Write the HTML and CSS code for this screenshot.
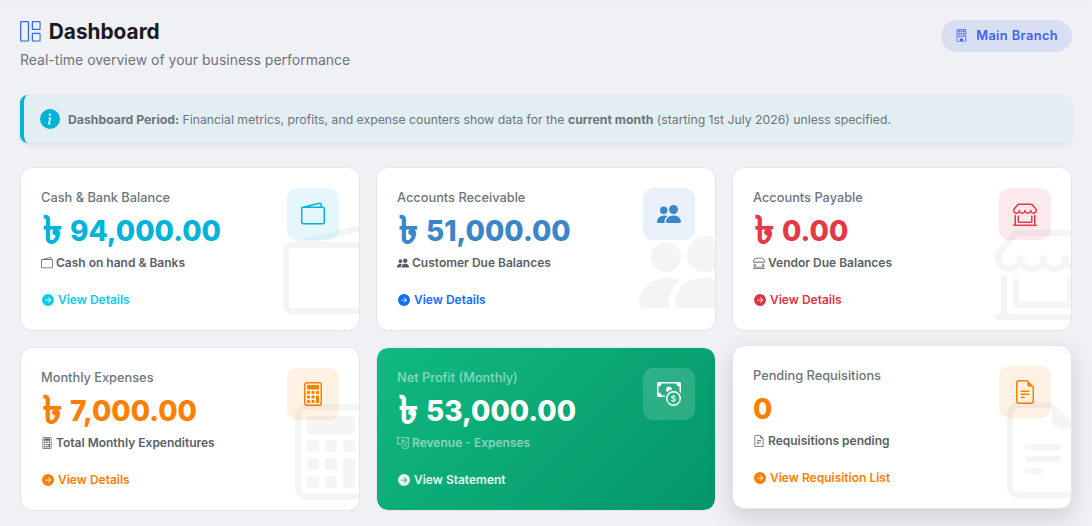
FILE: index.html
```html
<!DOCTYPE html>
<html lang="en">
<head>
  <meta charset="UTF-8">
  <meta name="viewport" content="width=device-width, initial-scale=1.0">
  <title>Dashboard</title>
  <link rel="stylesheet" href="styles.css">
</head>
<body>

  <!-- Icons -->
  <svg class="sprite" xmlns="http://www.w3.org/2000/svg">
    <symbol id="grid" viewBox="0 0 16 16"><path d="M6 1H1v14h5zm9 0h-5v5h5zm0 9v5h-5v-5zM0 1a1 1 0 0 1 1-1h5a1 1 0 0 1 1 1v14a1 1 0 0 1-1 1H1a1 1 0 0 1-1-1zm9 0a1 1 0 0 1 1-1h5a1 1 0 0 1 1 1v5a1 1 0 0 1-1 1h-5a1 1 0 0 1-1-1zm1 8a1 1 0 0 0-1 1v5a1 1 0 0 0 1 1h5a1 1 0 0 0 1-1v-5a1 1 0 0 0-1-1z"/></symbol>
    <symbol id="building" viewBox="0 0 16 16">
      <path d="M2 1a1 1 0 0 1 1-1h10a1 1 0 0 1 1 1v14a1 1 0 0 1-1 1H3a1 1 0 0 1-1-1zm11 0H3v14h3v-2.5a.5.5 0 0 1 .5-.5h3a.5.5 0 0 1 .5.5V15h3z"/>
      <path d="M4 2h2v2H4zM7 2h2v2H7zM10 2h2v2h-2zM4 5h2v2H4zM7 5h2v2H7zM10 5h2v2h-2zM4 8h2v2H4zM7 8h2v2H7zM10 8h2v2h-2z"/>
    </symbol>
    <symbol id="info" viewBox="0 0 16 16"><path d="M8 16A8 8 0 1 0 8 0a8 8 0 0 0 0 16m.93-9.412-1 4.705c-.07.34.029.533.304.533.194 0 .487-.07.686-.246l-.088.416c-.287.346-.92.598-1.465.598-.703 0-1.002-.422-.808-1.319l.738-3.468c.064-.293.006-.399-.287-.47l-.451-.081.082-.381 2.29-.287zM8 5.5a1 1 0 1 1 0-2 1 1 0 0 1 0 2"/></symbol>
    <symbol id="wallet" viewBox="0 0 16 16"><path d="M12.136.326A1.5 1.5 0 0 1 14 1.78V3h.5A1.5 1.5 0 0 1 16 4.5v9a1.5 1.5 0 0 1-1.5 1.5h-13A1.5 1.5 0 0 1 0 13.5v-9a1.5 1.5 0 0 1 1.432-1.499zM5.562 3H13V1.78a.5.5 0 0 0-.621-.484zM1.5 4a.5.5 0 0 0-.5.5v9a.5.5 0 0 0 .5.5h13a.5.5 0 0 0 .5-.5v-9a.5.5 0 0 0-.5-.5z"/></symbol>
    <symbol id="people" viewBox="0 0 16 16"><path d="M7 14s-1 0-1-1 1-4 5-4 5 3 5 4-1 1-1 1zm4-6a3 3 0 1 0 0-6 3 3 0 0 0 0 6m-5.784 6A2.24 2.24 0 0 1 5 13c0-1.355.68-2.75 1.936-3.72A6.3 6.3 0 0 0 5 9c-4 0-5 3-5 4s1 1 1 1zM4.5 8a2.5 2.5 0 1 0 0-5 2.5 2.5 0 0 0 0 5"/></symbol>
    <symbol id="shop" viewBox="0 0 16 16"><path d="M2.97 1.35A1 1 0 0 1 3.73 1h8.54a1 1 0 0 1 .76.35l2.609 3.044A1.5 1.5 0 0 1 16 5.37v.255a2.375 2.375 0 0 1-4.25 1.458A2.37 2.37 0 0 1 9.875 8 2.37 2.37 0 0 1 8 7.083 2.37 2.37 0 0 1 6.125 8a2.37 2.37 0 0 1-1.875-.917A2.375 2.375 0 0 1 0 5.625V5.37a1.5 1.5 0 0 1 .361-.976zm1.78 4.275a1.375 1.375 0 0 0 2.75 0 .5.5 0 0 1 1 0 1.375 1.375 0 0 0 2.75 0 .5.5 0 0 1 1 0 1.375 1.375 0 1 0 2.75 0V5.37a.5.5 0 0 0-.12-.325L12.27 2H3.73L1.12 5.045A.5.5 0 0 0 1 5.37v.255a1.375 1.375 0 0 0 2.75 0 .5.5 0 0 1 1 0M1.5 8.5A.5.5 0 0 1 2 9v6h12.5a.5.5 0 0 1-.5-.5V9a.5.5 0 0 1 1 0v6h.5a.5.5 0 0 1 0 1H.5a.5.5 0 0 1 0-1H1V9a.5.5 0 0 1 .5-.5m2 .5a.5.5 0 0 1 .5.5V13h8V9.5a.5.5 0 0 1 1 0V13a1 1 0 0 1-1 1H4a1 1 0 0 1-1-1V9.5a.5.5 0 0 1 .5-.5"/></symbol>
    <symbol id="calculator" viewBox="0 0 16 16">
      <path d="M12 1a1 1 0 0 1 1 1v12a1 1 0 0 1-1 1H4a1 1 0 0 1-1-1V2a1 1 0 0 1 1-1zM4 0a2 2 0 0 0-2 2v12a2 2 0 0 0 2 2h8a2 2 0 0 0 2-2V2a2 2 0 0 0-2-2z"/>
      <rect x="4" y="2" width="8" height="3" rx=".5"/>
      <rect x="4" y="6" width="2" height="2" rx=".5"/>
      <rect x="7" y="6" width="2" height="2" rx=".5"/>
      <rect x="10" y="6" width="2" height="2" rx=".5"/>
      <rect x="4" y="9" width="2" height="2" rx=".5"/>
      <rect x="7" y="9" width="2" height="2" rx=".5"/>
      <rect x="10" y="9" width="2" height="5" rx=".5"/>
      <rect x="4" y="12" width="2" height="2" rx=".5"/>
      <rect x="7" y="12" width="2" height="2" rx=".5"/>
    </symbol>
    <symbol id="cash" viewBox="0 0 16 16">
      <path fill-rule="evenodd" d="M11 15a4 4 0 1 0 0-8 4 4 0 0 0 0 8m5-4a5 5 0 1 1-10 0 5 5 0 0 1 10 0"/>
      <path d="M9.438 11.944c.047.596.518 1.06 1.363 1.116v.44h.375v-.443c.875-.061 1.386-.529 1.386-1.207 0-.618-.39-.936-1.09-1.1l-.296-.07v-1.2c.376.043.614.248.671.532h.658c-.047-.575-.54-1.024-1.329-1.073V8.5h-.375v.45c-.747.073-1.255.522-1.255 1.158 0 .562.378.92 1.007 1.066l.248.061v1.272c-.384-.058-.639-.27-.696-.563h-.668zm1.36-1.354c-.369-.085-.569-.26-.569-.522 0-.294.216-.514.572-.578v1.1zm.432.746c.449.104.655.272.655.569 0 .339-.257.571-.709.614v-1.195z"/>
      <path d="M1 0a1 1 0 0 0-1 1v8a1 1 0 0 0 1 1h4.083q.088-.517.258-1H3a2 2 0 0 0-2-2V3a2 2 0 0 0 2-2h10a2 2 0 0 0 2 2v3.528c.38.34.717.728 1 1.154V1a1 1 0 0 0-1-1z"/>
      <path d="M9.998 5.083 10 5a2 2 0 1 0-3.132 1.65 6 6 0 0 1 3.13-1.567"/>
    </symbol>
    <symbol id="file" viewBox="0 0 16 16">
      <path d="M5.5 7a.5.5 0 0 0 0 1h5a.5.5 0 0 0 0-1zM5 9.5a.5.5 0 0 1 .5-.5h5a.5.5 0 0 1 0 1h-5a.5.5 0 0 1-.5-.5m0 2a.5.5 0 0 1 .5-.5h2a.5.5 0 0 1 0 1h-2a.5.5 0 0 1-.5-.5"/>
      <path d="M9.5 0H4a2 2 0 0 0-2 2v12a2 2 0 0 0 2 2h8a2 2 0 0 0 2-2V4.5zm0 1v2A1.5 1.5 0 0 0 11 4.5h2V14a1 1 0 0 1-1 1H4a1 1 0 0 1-1-1V2a1 1 0 0 1 1-1z"/>
    </symbol>
    <symbol id="arrow" viewBox="0 0 16 16"><path d="M8 0a8 8 0 1 1 0 16A8 8 0 0 1 8 0M4.5 7.5a.5.5 0 0 0 0 1h5.793l-2.147 2.146a.5.5 0 0 0 .708.708l3-3a.5.5 0 0 0 0-.708l-3-3a.5.5 0 1 0-.708.708L10.293 7.5z"/></symbol>
  </svg>

  <div class="topbar"></div>

  <div class="page">
    <header class="header">
      <div>
        <h1><svg class="icon"><use href="#grid"/></svg>Dashboard</h1>
        <p>Real-time overview of your business performance</p>
      </div>
      <span class="branch"><svg class="icon"><use href="#building"/></svg>Main Branch</span>
    </header>

    <div class="alert">
      <svg class="icon"><use href="#info"/></svg>
      <div><strong>Dashboard Period:</strong> Financial metrics, profits, and expense counters show data for the <strong>current month</strong> (starting 1st July 2026) unless specified.</div>
    </div>

    <div class="cards">
      <div class="card cyan">
        <div class="label">Cash &amp; Bank Balance</div>
        <div class="value"><span class="taka">৳</span>94,000.00</div>
        <div class="note"><svg class="icon"><use href="#wallet"/></svg>Cash on hand &amp; Banks</div>
        <a class="link" href="#"><svg class="icon"><use href="#arrow"/></svg>View Details</a>
        <div class="badge"><svg class="icon"><use href="#wallet"/></svg></div>
        <svg class="icon watermark"><use href="#wallet"/></svg>
      </div>

      <div class="card blue">
        <div class="label">Accounts Receivable</div>
        <div class="value"><span class="taka">৳</span>51,000.00</div>
        <div class="note"><svg class="icon"><use href="#people"/></svg>Customer Due Balances</div>
        <a class="link" href="#"><svg class="icon"><use href="#arrow"/></svg>View Details</a>
        <div class="badge"><svg class="icon"><use href="#people"/></svg></div>
        <svg class="icon watermark"><use href="#people"/></svg>
      </div>

      <div class="card red">
        <div class="label">Accounts Payable</div>
        <div class="value"><span class="taka">৳</span>0.00</div>
        <div class="note"><svg class="icon"><use href="#shop"/></svg>Vendor Due Balances</div>
        <a class="link" href="#"><svg class="icon"><use href="#arrow"/></svg>View Details</a>
        <div class="badge"><svg class="icon"><use href="#shop"/></svg></div>
        <svg class="icon watermark"><use href="#shop"/></svg>
      </div>

      <div class="card orange">
        <div class="label">Monthly Expenses</div>
        <div class="value"><span class="taka">৳</span>7,000.00</div>
        <div class="note"><svg class="icon"><use href="#calculator"/></svg>Total Monthly Expenditures</div>
        <a class="link" href="#"><svg class="icon"><use href="#arrow"/></svg>View Details</a>
        <div class="badge"><svg class="icon"><use href="#calculator"/></svg></div>
        <svg class="icon watermark"><use href="#calculator"/></svg>
      </div>

      <div class="card profit">
        <div class="label">Net Profit (Monthly)</div>
        <div class="value"><span class="taka">৳</span>53,000.00</div>
        <div class="note"><svg class="icon"><use href="#cash"/></svg>Revenue - Expenses</div>
        <a class="link" href="#"><svg class="icon"><use href="#arrow"/></svg>View Statement</a>
        <div class="badge"><svg class="icon"><use href="#cash"/></svg></div>
      </div>

      <div class="card orange raised">
        <div class="label">Pending Requisitions</div>
        <div class="value">0</div>
        <div class="note"><svg class="icon"><use href="#file"/></svg>Requisitions pending</div>
        <a class="link" href="#"><svg class="icon"><use href="#arrow"/></svg>View Requisition List</a>
        <div class="badge"><svg class="icon"><use href="#file"/></svg></div>
        <svg class="icon watermark"><use href="#file"/></svg>
      </div>
    </div>
  </div>

</body>
</html>
```
FILE: styles.css
```css
* {
  box-sizing: border-box;
}
body {
  margin: 0;
  height: 526px;
  overflow: hidden;
  font-family: Inter, "Liberation Sans", sans-serif;
  background-color: #f0f1f5;
  color: #1a1a24;
}
h1, p {
  margin: 0;
}
.sprite {
  display: none;
}
.icon {
  flex: none;
  width: 1em;
  height: 1em;
  fill: currentColor;
}
.topbar {
  height: 1px;
  margin-top: -1px;
  box-shadow: 0 2px 4px rgba(0, 0, 0, 0.06);
}
.page {
  padding: 20px;
}
.header {
  display: flex;
  justify-content: space-between;
  align-items: flex-start;
  height: 75px;
}
.header h1 {
  display: flex;
  align-items: center;
  gap: 8px;
  height: 23px;
  font-size: 20.8px;
  font-weight: 700;
}
.header h1 .icon {
  color: #2f6bff;
}
.header p {
  margin-top: 6px;
  line-height: 22px;
  font-size: 14px;
  color: #6c757d;
}
.branch {
  display: flex;
  align-items: center;
  gap: 8px;
  height: 32px;
  padding: 0 14px 1px;
  border-radius: 16px;
  background-color: #d9dff3;
  color: #4361ee;
  font-size: 12.8px;
  font-weight: 600;
  letter-spacing: 0.4px;
}
.alert {
  display: flex;
  align-items: center;
  gap: 8px;
  height: 48px;
  padding: 0 16px;
  border-left: 4px solid #00b4d8;
  border-radius: 8px;
  background-color: #e2eef2;
  box-shadow: 0 2px 4px rgba(0, 0, 0, 0.07);
  color: #6c757d;
  font-size: 12.25px;
}
.alert .icon {
  width: 20px;
  height: 20px;
  color: #00b4d8;
}
.cards {
  display: grid;
  grid-template-columns: repeat(3, 1fr);
  gap: 16px;
  margin-top: 24px;
}
.card {
  position: relative;
  height: 164px;
  padding: 20px;
  overflow: hidden;
  border: 1px solid #e4e6ec;
  border-radius: 12px;
  background-color: #fff;
  background-clip: padding-box;
}
.label {
  line-height: 20px;
  font-size: 12.8px;
  font-weight: 500;
  color: #6c757d;
}
.value {
  margin-top: 5px;
  height: 36px;
  line-height: 36px;
  font-size: 28px;
  font-weight: 800;
  white-space: nowrap;
}
.taka {
  display: inline-block;
  width: 27px;
  margin-left: 2px;
  line-height: 0;
  font-size: 38px;
  vertical-align: -2px;
  -webkit-text-stroke: 0.5px currentColor;
}
.note {
  display: flex;
  align-items: center;
  gap: 3px;
  margin-top: 4px;
  line-height: 20px;
  font-size: 12px;
  font-weight: 600;
  color: #5a5f65;
}
.note .icon {
  width: 12px;
  height: 12px;
}
.link {
  display: flex;
  align-items: center;
  gap: 4px;
  margin: 17px 0 0 1px;
  line-height: 20px;
  font-size: 12px;
  font-weight: 600;
  color: inherit;
  text-decoration: none;
}
.link .icon {
  width: 12px;
  height: 12px;
}
.badge {
  position: absolute;
  top: 20px;
  right: 20px;
  display: flex;
  align-items: center;
  justify-content: center;
  width: 52px;
  height: 52px;
  border-radius: 10px;
  font-size: 24px;
}
.watermark {
  position: absolute;
  right: -20px;
  bottom: 10px;
  font-size: 96px;
  color: #000;
  opacity: 0.04;
}
.cyan .value, .cyan .badge {
  color: #00b4d8;
}
.cyan .badge {
  background-color: #e5f7fd;
}
.cyan .link {
  color: #0dcaf0;
}
.blue .value, .blue .badge {
  color: #3a86c8;
}
.blue .badge {
  background-color: #e9f2fa;
}
.blue .link {
  color: #0d6efd;
}
.red .value, .red .badge {
  color: #e63946;
}
.red .badge {
  background-color: #fdeaec;
}
.red .link {
  color: #dc3545;
}
.orange .value, .orange .badge, .orange .link {
  color: #fb8000;
}
.orange .badge {
  background-color: #fff1e3;
}
.profit {
  background-image: linear-gradient(135deg, #10b981, #059669);
  color: #fff;
}
.profit .label, .profit .note {
  color: rgba(255, 255, 255, 0.5);
}
.profit .link {
  color: #e7f7f1;
}
.profit .badge {
  background-color: rgba(255, 255, 255, 0.15);
}
.raised {
  top: -2px;
  box-shadow: 0 8px 24px rgba(0, 0, 0, 0.15);
}
```
